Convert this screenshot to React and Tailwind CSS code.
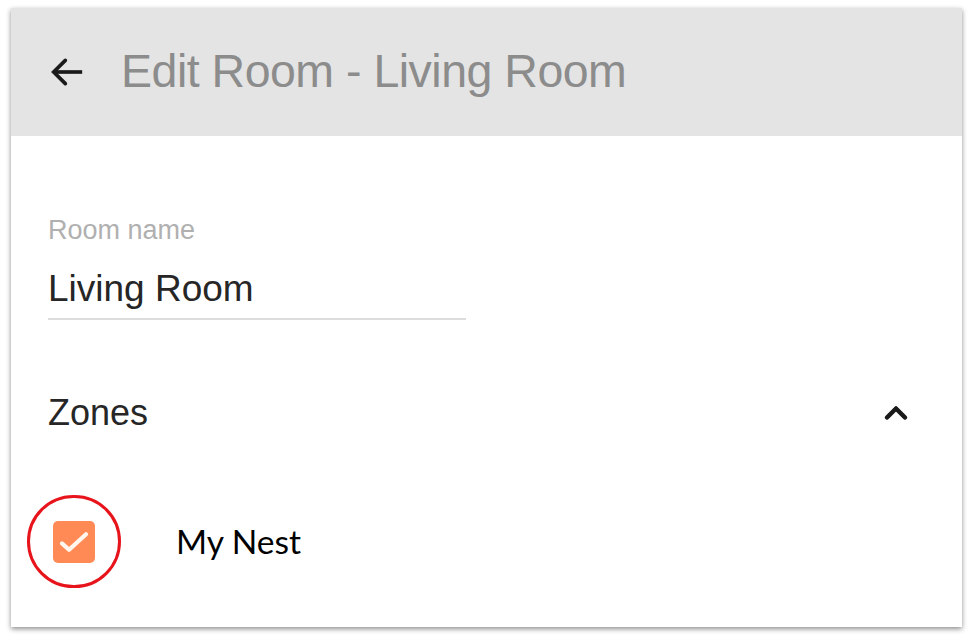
import { ChevronUp } from 'lucide-react';

function App() {
  return (
    <div className="w-[975px] h-[641px] bg-white pt-[8px] pl-[11px]">
      <div className="w-[951px] h-[619px] bg-white flex flex-col shadow-[0_2px_5px_rgba(0,0,0,0.45)] font-['Liberation_Sans',sans-serif]">
        {/* Header */}
        <div className="h-[128px] bg-[#e4e4e4] flex items-center pl-[36px]">
          <svg width="40" height="40" viewBox="0 0 24 24" fill="none" stroke="#1a1a1a" strokeWidth="2.2" strokeLinecap="square">
            <path d="M20 12H5" />
            <path d="M11 5l-7 7 7 7" strokeLinecap="round" strokeLinejoin="miter" />
          </svg>
          <h1 className="ml-[34px] text-[46.5px] text-[#8c8c8c] font-light tracking-[-0.5px]">Edit Room - Living Room</h1>
        </div>

        {/* Form */}
        <div className="px-[37px] pt-[81px]">
          <label className="block text-[27px] leading-none text-[#b0b0b0]">Room name</label>
          <div className="w-[418px] mt-[26px] pb-[11px] border-b-2 border-[#dcdcdc] text-[37px] leading-none text-[#262626]">
            Living Room
          </div>
        </div>

        {/* Zones */}
        <div className="flex items-center justify-between pl-[37px] pr-[48px] mt-[75px]">
          <span className="text-[36px] leading-none text-[#262626]">Zones</span>
          <ChevronUp size={36} strokeWidth={3} color="#1a1a1a" />
        </div>

        <div className="flex items-center mt-[64px] pl-[16px]">
          <div className="relative w-[94px] h-[93px] flex items-center justify-center">
            <div className="w-[42px] h-[42px] rounded-[5px] bg-[#ff8a55] flex items-center justify-center">
              <svg width="34" height="34" viewBox="0 0 24 24" fill="none" stroke="#fff6ee" strokeWidth="3" strokeLinecap="round" strokeLinejoin="round">
                <path d="M3.5 13l5 4.5L20.5 6.5" />
              </svg>
            </div>
            <div className="absolute inset-0 rounded-full border-[3px] border-[#e8141c]" />
          </div>
          <span className="ml-[55px] text-[33.5px] text-black font-['Lato',sans-serif]">My Nest</span>
        </div>
      </div>
    </div>
  );
}

export default App;
